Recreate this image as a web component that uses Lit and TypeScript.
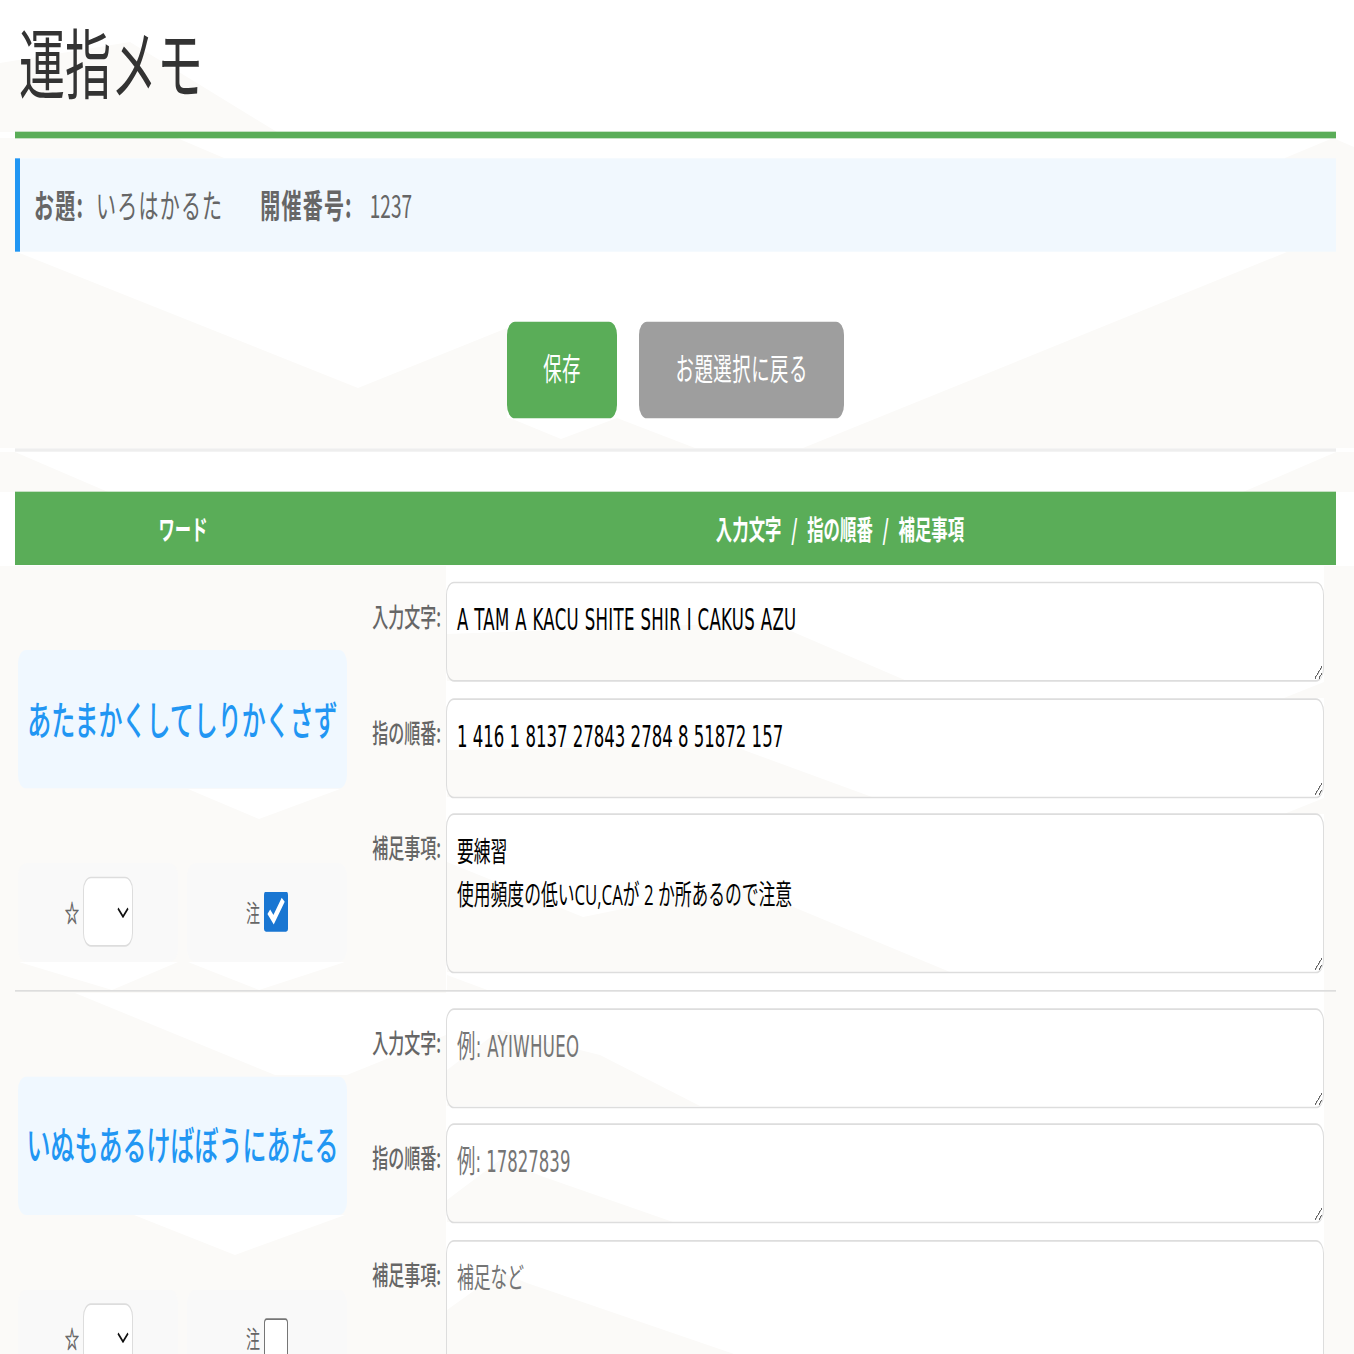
import { LitElement, html, css, svg } from "lit";
import { customElement } from "lit/decorators.js";

interface Row {
  word: string;
  keys: string;
  fingers: string;
  note: string;
  flagged: boolean;
}

const ROWS: Row[] = [
  {
    word: "あたまかくしてしりかくさず",
    keys: "A TAM A KACU SHITE SHIR I CAKUS AZU",
    fingers: "1 416 1 8137 27843 2784 8 51872 157",
    note: "要練習\n使用頻度の低いCU,CAが 2 か所あるので注意",
    flagged: true,
  },
  { word: "いぬもあるけばぼうにあたる", keys: "", fingers: "", note: "", flagged: false },
];

const TINT: string[] = [
  "0,63 130,42 277,132 0,132",
  "0,138 177,138 224,158 0,158",
  "1285,158 1333,138 1354,147 1354,252 1285,252",
  "0,158 15,158 15,252 0,252",
  "0,252 17,252 358,388 507,328 507,418 510,418 561,439 617,418 695,448 0,448",
  "803,448 1287,252 1354,252 1354,448",
  "0,452 15,452 108,492 0,492",
  "1243,492 1336,452 1354,452 1354,492",
  "0,566 446,566 446,1354 0,1354",
  "447,634 770,622 907,681 447,681",
  "447,750 730,745 872,797 447,797",
  "447,862 583,917 740,885 950,972 447,972",
  "447,975 490,991 447,991",
  "447,1070 500,1030 600,1055 700,1106 447,1106",
  "447,1200 500,1160 544,1177 673,1222 447,1222",
  "447,1310 500,1272 527,1283 734,1354 447,1354",
  "1324,566 1354,566 1354,1354 1324,1354",
  "1284,698 1324,682 1324,698",
  "1284,814 1324,798 1324,814",
];

const WHITE: string[] = [
  "188,789 259,819 340,789",
  "19,962 112,990 178,962",
  "188,962 259,990 345,962",
  "75,993 275,1075 347,1075 446,1035 446,993",
  "134,1215 235,1255 345,1215",
];

@customElement("app-root")
export class AppRoot extends LitElement {
  static styles = css`
    :host {
      display: block;
      position: relative;
      width: 1354px;
      height: 1354px;
      overflow: hidden;
      background: #fff;
      font-family: "Noto Sans CJK JP", "Noto Sans", sans-serif;
    }
    .backdrop {
      position: absolute;
      left: 0;
      top: 0;
      width: 1354px;
      height: 1354px;
    }
    .page {
      position: relative;
      box-sizing: border-box;
      width: 1354px;
      padding: 0 18px 0 15px;
      transform: scaleY(1.6667);
      transform-origin: 0 0;
    }
    h1 {
      margin: 0;
      height: 79.2px;
      display: flex;
      align-items: center;
      padding: 0 0 8px 4px;
      box-sizing: border-box;
      font-size: 46px;
      font-weight: 400;
      color: #333;
      line-height: 1;
    }
    .rule {
      height: 3.6px;
      background: #5aad58;
    }
    .info {
      margin-top: 12px;
      height: 56.4px;
      box-sizing: border-box;
      border-left: 5px solid #2196f3;
      background: #f1f8fe;
      padding-left: 14px;
      display: flex;
      align-items: center;
      font-size: 20px;
      letter-spacing: 1.2px;
      color: #666;
    }
    .info b {
      font-weight: 700;
    }
    .info .value {
      margin-left: 12px;
      font-weight: 400;
    }
    .info .num {
      font-size: 19px;
      letter-spacing: 0;
      margin-left: 17px;
    }
    .info .pair + .pair {
      margin-left: 37px;
    }
    .actions {
      margin-top: 42px;
      display: flex;
      justify-content: center;
      gap: 22px;
    }
    .btn {
      height: 57.6px;
      box-sizing: border-box;
      padding: 0 36.3px 3px;
      border: 0;
      border-radius: 8px;
      color: #fff;
      font: inherit;
      font-size: 18.4px;
      letter-spacing: 0.5px;
      background: #5aad58;
    }
    .btn.back {
      background: #9e9e9e;
    }
    .sep {
      margin-top: 18px;
      height: 2.4px;
      background: #eeeeee;
    }
    .head {
      margin-top: 24.2px;
      height: 44px;
      display: flex;
      align-items: center;
      background: #5aad58;
      color: #fff;
      font-size: 16.4px;
      font-weight: 700;
      word-spacing: 6px;
    }
    .head .c1 {
      width: 336px;
      text-align: center;
    }
    .head .c2 {
      flex: 1;
      text-align: center;
      padding-right: 7px;
    }
    .row {
      display: flex;
      padding: 9.8px 0 9.6px;
      border-bottom: 1.2px solid #dddddd;
    }
    .left {
      box-sizing: border-box;
      width: 336px;
      padding: 40.8px 4px 0 3px;
      display: flex;
      flex-direction: column;
      gap: 45px;
    }
    .word {
      height: 83.4px;
      box-sizing: border-box;
      padding-bottom: 3px;
      border-radius: 8px;
      background: #f0f8ff;
      color: #2196f3;
      font-size: 24px;
      font-weight: 500;
      display: flex;
      align-items: center;
      justify-content: center;
      white-space: nowrap;
    }
    .opts {
      display: flex;
      gap: 9px;
    }
    .opt {
      flex: 1;
      height: 58.8px;
      box-sizing: border-box;
      padding-bottom: 1px;
      border-radius: 8px;
      background: #f9f9f9;
      display: flex;
      align-items: center;
      justify-content: center;
      gap: 4px;
      font-size: 14px;
      color: #666;
    }
    .star {
      margin-left: 2px;
      -webkit-text-stroke: 0.4px #666;
    }
    .opt select {
      appearance: none;
      width: 50px;
      height: 42px;
      box-sizing: border-box;
      border: 1px solid #ddd;
      border-radius: 8px;
      background: #fff
        url("data:image/svg+xml,%3Csvg xmlns='http://www.w3.org/2000/svg' width='12' height='7' viewBox='0 0 12 7'%3E%3Cpath d='M1 1l5 5 5-5' fill='none' stroke='%23111' stroke-width='1.4'/%3E%3C/svg%3E")
        no-repeat right 3px center;
      color: #000;
      margin: 0;
    }
    .opt input {
      width: 24px;
      height: 24px;
      margin: 0;
      accent-color: #1976d2;
    }
    .fields {
      flex: 1;
      display: flex;
      flex-direction: column;
      gap: 9.6px;
      padding-right: 12px;
      min-width: 0;
    }
    .field {
      display: flex;
      gap: 5px;
    }
    .field label {
      width: 90px;
      text-align: right;
      font-size: 16px;
      font-weight: 500;
      line-height: 24px;
      padding-top: 8px;
      color: #666;
      white-space: nowrap;
    }
    textarea {
      flex: 1;
      display: block;
      height: 60px;
      box-sizing: border-box;
      margin: 0;
      padding: 9px 10px;
      border: 1px solid #ddd;
      border-radius: 8px;
      background: transparent;
      color: #000;
      font-family: "Open Sans", "Noto Sans CJK JP", sans-serif;
      font-size: 16.8px;
      line-height: 25.2px;
    }
    textarea.latin {
      font-family: "DejaVu Sans Condensed", "Open Sans", "Noto Sans CJK JP", sans-serif;
      font-stretch: condensed;
      font-size: 18.4px;
    }
    textarea.keys {
      letter-spacing: 0.35px;
    }
    textarea.tall {
      height: 96px;
    }
  `;

  private backdrop() {
    return html`<svg class="backdrop" viewBox="0 0 1354 1354" aria-hidden="true">
      ${TINT.map((p) => svg`<polygon points=${p} fill="#fbfaf8"></polygon>`)}
      ${WHITE.map((p) => svg`<polygon points=${p} fill="#ffffff"></polygon>`)}
    </svg>`;
  }

  private renderRow(r: Row) {
    return html`<div class="row">
      <div class="left">
        <div class="word">${r.word}</div>
        <div class="opts">
          <div class="opt">
            <span class="star">☆</span>
            <select><option></option></select>
          </div>
          <div class="opt">
            <span>注</span>
            <input type="checkbox" .checked=${r.flagged} />
          </div>
        </div>
      </div>
      <div class="fields">
        <div class="field">
          <label>入力文字:</label>
          <textarea class="latin keys" placeholder="例: AYIWHUEO" .value=${r.keys}></textarea>
        </div>
        <div class="field">
          <label>指の順番:</label>
          <textarea class="latin" placeholder="例: 17827839" .value=${r.fingers}></textarea>
        </div>
        <div class="field">
          <label>補足事項:</label>
          <textarea class="tall" placeholder="補足など" .value=${r.note}></textarea>
        </div>
      </div>
    </div>`;
  }

  render() {
    return html`${this.backdrop()}
      <div class="page">
        <h1>運指メモ</h1>
        <div class="rule"></div>
        <div class="info">
          <span class="pair"><b>お題:</b><span class="value">いろはかるた</span></span>
          <span class="pair"><b>開催番号:</b><span class="value num">1237</span></span>
        </div>
        <div class="actions">
          <button class="btn">保存</button>
          <button class="btn back">お題選択に戻る</button>
        </div>
        <div class="sep"></div>
        <div class="head">
          <div class="c1">ワード</div>
          <div class="c2">入力文字 / 指の順番 / 補足事項</div>
        </div>
        ${ROWS.map((r) => this.renderRow(r))}
      </div>`;
  }
}
